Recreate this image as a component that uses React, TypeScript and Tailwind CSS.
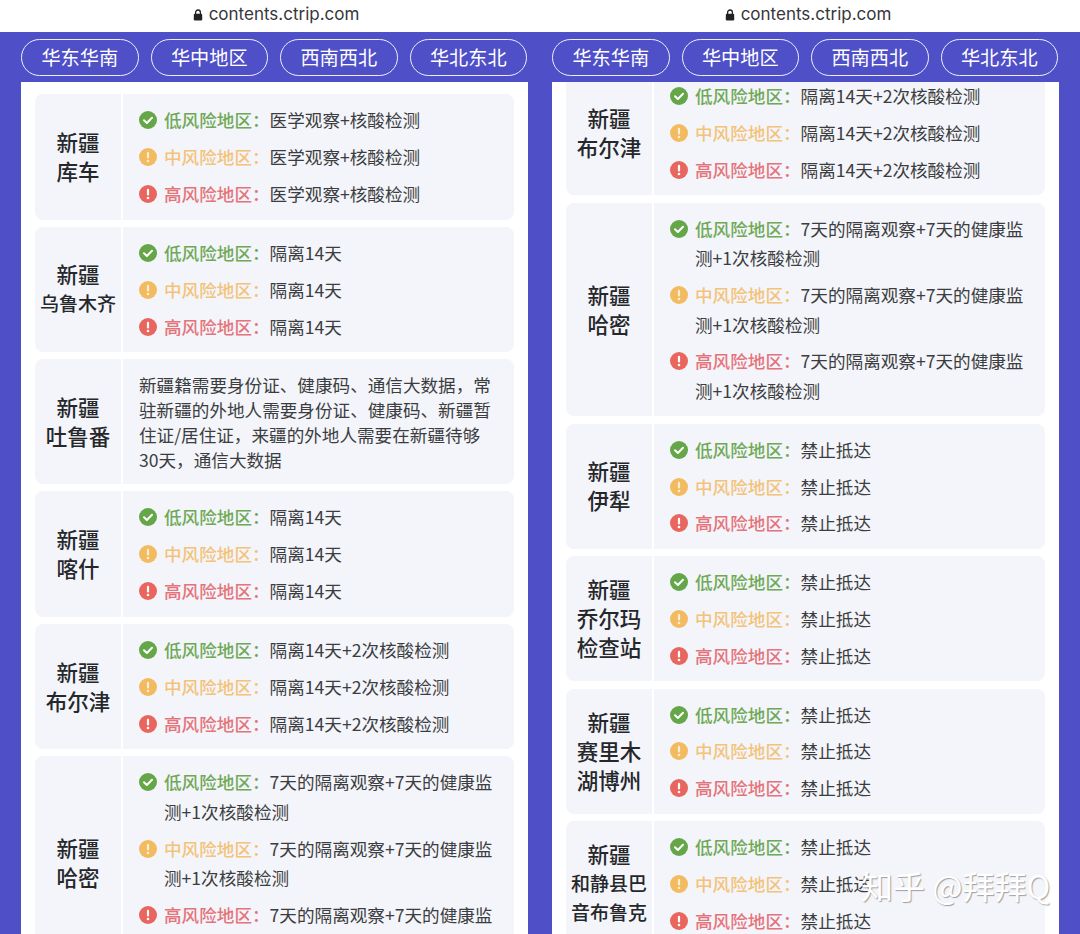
import React from 'react';

type Risk = 'low' | 'mid' | 'high';

const riskConfig: Record<Risk, { label: string; labelClass: string; iconClass: string }> = {
  low: { label: '低风险地区', labelClass: 'text-[#6fa956]', iconClass: 'text-[#65a748]' },
  mid: { label: '中风险地区', labelClass: 'text-[#f3c37a]', iconClass: 'text-[#f3bb5f]' },
  high: { label: '高风险地区', labelClass: 'text-[#e5747a]', iconClass: 'text-[#e9665f]' },
};

const TABS = ['华东华南', '华中地区', '西南西北', '华北东北'];
const QUARANTINE = '7天的隔离观察+7天的健康监测+1次核酸检测';

interface CardData {
  name: string[];
  value?: string;
  note?: string;
}

const leftCards: CardData[] = [
  { name: ['新疆', '库车'], value: '医学观察+核酸检测' },
  { name: ['新疆', '乌鲁木齐'], value: '隔离14天' },
  {
    name: ['新疆', '吐鲁番'],
    note: '新疆籍需要身份证、健康码、通信大数据，常驻新疆的外地人需要身份证、健康码、新疆暂住证/居住证，来疆的外地人需要在新疆待够30天，通信大数据',
  },
  { name: ['新疆', '喀什'], value: '隔离14天' },
  { name: ['新疆', '布尔津'], value: '隔离14天+2次核酸检测' },
  { name: ['新疆', '哈密'], value: QUARANTINE },
];

const rightCards: CardData[] = [
  { name: ['新疆', '布尔津'], value: '隔离14天+2次核酸检测' },
  { name: ['新疆', '哈密'], value: QUARANTINE },
  { name: ['新疆', '伊犁'], value: '禁止抵达' },
  { name: ['新疆', '乔尔玛', '检查站'], value: '禁止抵达' },
  { name: ['新疆', '赛里木', '湖博州'], value: '禁止抵达' },
  { name: ['新疆', '和静县巴', '音布鲁克'], value: '禁止抵达' },
];

const RiskIcon: React.FC<{ risk: Risk }> = ({ risk }) => (
  <svg viewBox="0 0 18 18" className={`absolute left-[-25px] top-[6px] w-[18px] h-[18px] ${riskConfig[risk].iconClass}`}>
    <circle cx="9" cy="9" r="9" fill="currentColor" />
    {risk === 'low' ? (
      <path d="M5 9.2l2.9 2.8L13 6.8" fill="none" stroke="#fff" strokeWidth="2" strokeLinecap="round" strokeLinejoin="round" />
    ) : (
      <>
        <rect x="7.9" y="3.8" width="2.2" height="6.8" rx="1.1" fill="#fff" opacity={risk === 'mid' ? 0.75 : 1} />
        <circle cx="9" cy="13" r="1.3" fill="#fff" opacity={risk === 'mid' ? 0.75 : 1} />
      </>
    )}
  </svg>
);

const RiskRow: React.FC<{ risk: Risk; value: string }> = ({ risk, value }) => (
  <div className="relative ml-[25px] leading-[29.5px] text-[#3c3d40] pr-[12px]">
    <RiskIcon risk={risk} />
    <span className={`font-medium ${riskConfig[risk].labelClass}`}>{riskConfig[risk].label}：</span>
    {value}
  </div>
);

const Card: React.FC<{ card: CardData }> = ({ card }) => (
  <div className="flex rounded-[8px] overflow-hidden gap-[2px] shrink-0">
    <div className="w-[86px] shrink-0 pb-[2px] bg-[#f3f5fa] flex flex-col items-center justify-center text-[#26272a] font-medium leading-[29px]">
      {card.name.map((line) => (
        <div key={line} className={line.length > 3 ? 'text-[19px]' : 'text-[21.5px]'}>
          {line}
        </div>
      ))}
    </div>
    <div className="flex-1 bg-[#f3f5fa] text-[17.6px]">
      {card.note ? (
        <div className="pl-[16px] pr-[20px] py-[12.5px] leading-[25px] text-[#3c3d40]">{card.note}</div>
      ) : (
        <div className="pl-[16px] py-[11px] flex flex-col gap-[7.4px]">
          <RiskRow risk="low" value={card.value ?? ''} />
          <RiskRow risk="mid" value={card.value ?? ''} />
          <RiskRow risk="high" value={card.value ?? ''} />
        </div>
      )}
    </div>
  </div>
);

interface PhoneProps {
  cards: CardData[];
  shellClass: string;
  urlClass: string;
  insetClass: string;
  listClass: string;
}

const Phone: React.FC<PhoneProps> = ({ cards, shellClass, urlClass, insetClass, listClass }) => (
  <div className={`h-[934px] flex flex-col overflow-hidden ${shellClass}`}>
    <div className={`h-[32px] pb-[2px] shrink-0 bg-white flex items-center justify-center gap-[6px] text-[#35363a] text-[17px] font-['Inter','Liberation_Sans',sans-serif] ${urlClass}`}>
      <svg viewBox="0 0 10 12" className="w-[10px] h-[12px]">
        <path d="M2.6 5V3.4a2.4 2.4 0 0 1 4.8 0V5" fill="none" stroke="#222" strokeWidth="1.3" />
        <rect x="0.8" y="4.8" width="8.4" height="6.6" rx="1.2" fill="#222" />
      </svg>
      contents.ctrip.com
    </div>
    <div className={`h-[50px] shrink-0 bg-[#4f4fc8] flex items-center gap-[12px] ${insetClass}`}>
      {TABS.map((tab) => (
        <div
          key={tab}
          className="w-[117.5px] h-[37px] shrink-0 rounded-full border-[1.5px] border-white/90 text-white text-[19.2px] flex items-center justify-center"
        >
          {tab}
        </div>
      ))}
    </div>
    <div className={`flex-1 min-h-0 bg-[#4f4fc8] ${insetClass}`}>
      <div className="w-[507px] h-full bg-white overflow-hidden px-[14px]">
        <div className={`flex flex-col gap-[7.2px] ${listClass}`}>
          {cards.map((card) => (
            <Card key={card.name.join('')} card={card} />
          ))}
        </div>
      </div>
    </div>
  </div>
);

export default function App() {
  return (
    <div className="relative w-[1080px] h-[934px] bg-white overflow-hidden flex font-['Noto_Sans_CJK_SC','Liberation_Sans',sans-serif]">
      <Phone cards={leftCards} shellClass="w-[528px]" urlClass="pl-[24px]" insetClass="pl-[21px]" listClass="mt-[12.3px]" />
      <Phone cards={rightCards} shellClass="w-[552px]" urlClass="pl-[8px]" insetClass="pl-[24px]" listClass="mt-[-11.8px]" />
      <div className="absolute left-[861px] top-[865px] text-[32px] leading-[40px] text-white [text-shadow:1px_1px_1px_rgba(90,90,90,0.55)]">
        知乎 @拜拜Q
      </div>
    </div>
  );
}
